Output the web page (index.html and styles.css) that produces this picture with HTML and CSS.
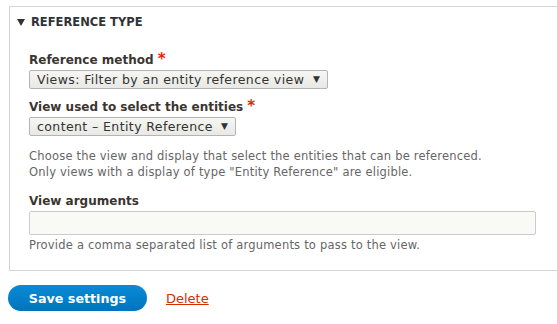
FILE: index.html
```html
<!DOCTYPE html>
<html lang="en">
<head>
    <meta charset="UTF-8">
    <meta name="viewport" content="width=device-width, initial-scale=1.0">
    <title>Field settings</title>
    <link rel="stylesheet" href="styles.css">
</head>
<body>
    <form class="settings-form">
        <details class="panel" open>
            <summary class="panel-title">
                <svg class="panel-arrow" width="8" height="7" viewBox="0 0 8 7"><path d="M0 0H8L4 7Z" fill="#333"/></svg>
                Reference type
            </summary>
            <div class="panel-body">
                <div class="field">
                    <label class="field-label">Reference method <span class="required">*</span></label>
                    <div class="select-wrap">
                        <select class="select">
                            <option>Views: Filter by an entity reference view</option>
                        </select>
                        <span class="select-arrow">&#9660;</span>
                    </div>
                </div>
                <div class="field">
                    <label class="field-label">View used to select the entities <span class="required">*</span></label>
                    <div class="select-wrap">
                        <select class="select">
                            <option>content – Entity Reference</option>
                        </select>
                        <span class="select-arrow">&#9660;</span>
                    </div>
                    <div class="description">Choose the view and display that select the entities that can be referenced.<br>Only views with a display of type "Entity Reference" are eligible.</div>
                </div>
                <div class="field">
                    <label class="field-label">View arguments</label>
                    <input class="text-input" type="text">
                    <div class="description tight">Provide a comma separated list of arguments to pass to the view.</div>
                </div>
            </div>
        </details>
        <div class="form-actions">
            <button type="button" class="button-primary">Save settings</button>
            <a href="#" class="delete-link">Delete</a>
        </div>
    </form>
</body>
</html>
```

FILE: styles.css
```css
body {
    margin: 0;
    padding: 6px 0 0 9px;
    font-family: "DejaVu Sans", "Noto Sans", sans-serif;
    color: #333;
    background: #fff;
    overflow: hidden;
}

.panel {
    width: 600px;
    border: 1px solid #d4d4d4;
    margin: 0;
}

.panel-title {
    list-style: none;
    display: flex;
    align-items: center;
    padding: 8px 0 8px 7px;
    font-size: 11.5px;
    line-height: 15px;
    font-weight: bold;
    text-transform: uppercase;
    color: #2f3338;
    cursor: pointer;
}

.panel-title::-webkit-details-marker {
    display: none;
}

.panel-arrow {
    margin-right: 6px;
}

.panel-body {
    padding: 14px 20px 17px 19px;
}

.field {
    margin-bottom: 10px;
}

.field:last-child {
    margin-bottom: 0;
}

.field-label {
    display: block;
    font-size: 12px;
    line-height: 16px;
    font-weight: bold;
    color: #3b3530;
    margin-bottom: 2px;
}

.required {
    color: #e62600;
    font-size: 15px;
    line-height: 0;
}

.select-wrap {
    position: relative;
    display: inline-block;
    vertical-align: top;
}

.select {
    display: block;
    -webkit-appearance: none;
    appearance: none;
    font-family: inherit;
    font-size: 12.5px;
    letter-spacing: 0.4px;
    height: 19px;
    line-height: 17px;
    padding: 0 22px 0 7px;
    border: 1px solid #b4b4b4;
    border-radius: 2px;
    background: linear-gradient(#f6f6f3, #e8e8e4);
    color: #333;
    margin: 0;
}

.select-arrow {
    position: absolute;
    right: 8px;
    top: 3px;
    font-size: 9px;
    line-height: 13px;
    color: #333;
    pointer-events: none;
}

.description {
    font-size: 11.5px;
    letter-spacing: 0.2px;
    line-height: 16px;
    color: #666;
    margin-top: 12px;
    margin-bottom: 13px;
}

.description.tight {
    margin-top: 2px;
    margin-bottom: 0;
}

.text-input {
    display: block;
    box-sizing: border-box;
    width: 507px;
    height: 24px;
    margin: 0;
    border: 1px solid #ccc;
    border-radius: 2px;
    background: #f9f9f6;
    font-family: inherit;
    font-size: 12px;
}

.form-actions {
    display: flex;
    align-items: center;
    margin-top: 14px;
}

.button-primary {
    width: 139px;
    height: 26px;
    border: none;
    border-radius: 13px;
    background: linear-gradient(#0a8ad6, #0074bd);
    color: #fff;
    font-family: inherit;
    font-size: 12.7px;
    font-weight: bold;
    cursor: pointer;
    margin-left: -1px;
}

.delete-link {
    margin-left: 19px;
    font-size: 13px;
    color: #d52c00;
    text-decoration: underline;
}
```
